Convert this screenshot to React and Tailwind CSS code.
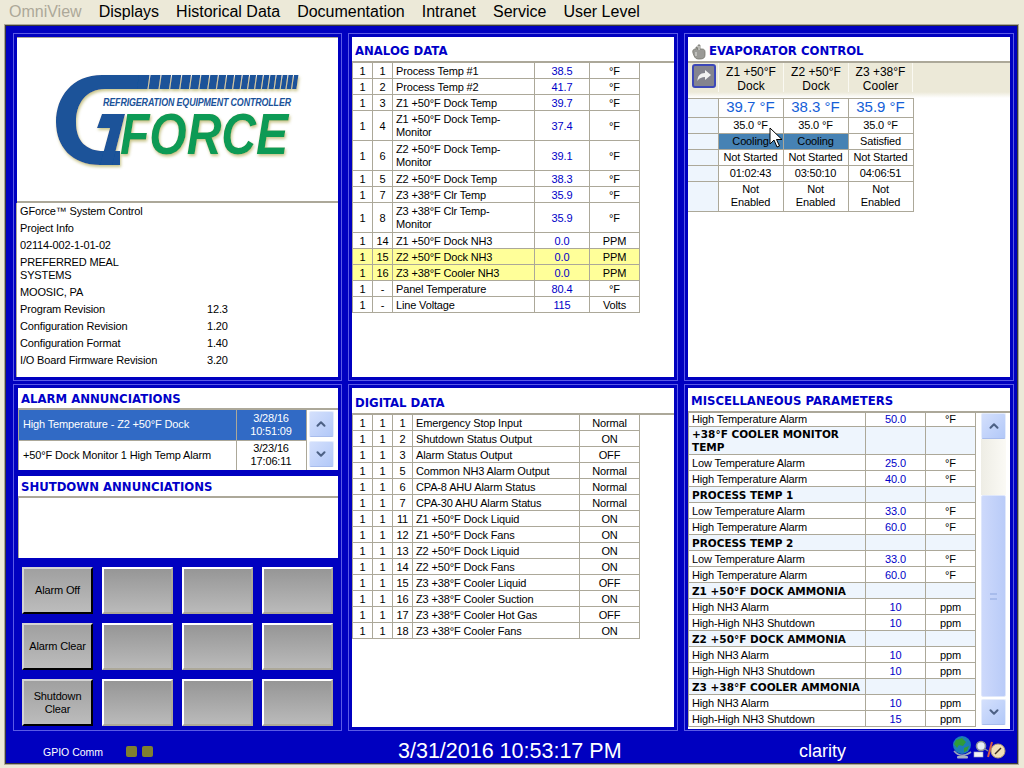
import { ChevronUp, ChevronDown } from "lucide-react";

const menu = ["Displays", "Historical Data", "Documentation", "Intranet", "Service", "User Level"];

const analog = [
  ["1", "1", "Process Temp #1", "38.5", "°F"],
  ["1", "2", "Process Temp #2", "41.7", "°F"],
  ["1", "3", "Z1 +50°F Dock Temp", "39.7", "°F"],
  ["1", "4", "Z1 +50°F Dock Temp-\nMonitor", "37.4", "°F"],
  ["1", "6", "Z2 +50°F Dock Temp-\nMonitor", "39.1", "°F"],
  ["1", "5", "Z2 +50°F Dock Temp", "38.3", "°F"],
  ["1", "7", "Z3 +38°F Clr Temp", "35.9", "°F"],
  ["1", "8", "Z3 +38°F Clr Temp-\nMonitor", "35.9", "°F"],
  ["1", "14", "Z1 +50°F Dock NH3", "0.0", "PPM"],
  ["1", "15", "Z2 +50°F Dock NH3", "0.0", "PPM", true],
  ["1", "16", "Z3 +38°F Cooler NH3", "0.0", "PPM", true],
  ["1", "-", "Panel Temperature", "80.4", "°F"],
  ["1", "-", "Line Voltage", "115", "Volts"],
];

const digital = [
  ["1", "Emergency Stop Input", "Normal"],
  ["2", "Shutdown Status Output", "ON"],
  ["3", "Alarm Status Output", "OFF"],
  ["5", "Common NH3 Alarm Output", "Normal"],
  ["6", "CPA-8 AHU Alarm Status", "Normal"],
  ["7", "CPA-30 AHU Alarm Status", "Normal"],
  ["11", "Z1 +50°F Dock Liquid", "ON"],
  ["12", "Z1 +50°F Dock Fans", "ON"],
  ["13", "Z2 +50°F Dock Liquid", "ON"],
  ["14", "Z2 +50°F Dock Fans", "ON"],
  ["15", "Z3 +38°F Cooler Liquid", "OFF"],
  ["16", "Z3 +38°F Cooler Suction", "ON"],
  ["17", "Z3 +38°F Cooler Hot Gas", "OFF"],
  ["18", "Z3 +38°F Cooler Fans", "ON"],
];

const misc = [
  ["High Temperature Alarm", "50.0", "°F"],
  ["+38°F COOLER MONITOR TEMP"],
  ["Low Temperature Alarm", "25.0", "°F"],
  ["High Temperature Alarm", "40.0", "°F"],
  ["PROCESS TEMP 1"],
  ["Low Temperature Alarm", "33.0", "°F"],
  ["High Temperature Alarm", "60.0", "°F"],
  ["PROCESS TEMP 2"],
  ["Low Temperature Alarm", "33.0", "°F"],
  ["High Temperature Alarm", "60.0", "°F"],
  ["Z1 +50°F DOCK AMMONIA"],
  ["High NH3 Alarm", "10", "ppm"],
  ["High-High NH3 Shutdown", "10", "ppm"],
  ["Z2 +50°F DOCK AMMONIA"],
  ["High NH3 Alarm", "10", "ppm"],
  ["High-High NH3 Shutdown", "10", "ppm"],
  ["Z3 +38°F COOLER AMMONIA"],
  ["High NH3 Alarm", "10", "ppm"],
  ["High-High NH3 Shutdown", "15", "ppm"],
];

const zones = [
  { name: ["Z1 +50°F", "Dock"], temp: "39.7 °F", set: "35.0 °F", state: "Cooling", time: "01:02:43" },
  { name: ["Z2 +50°F", "Dock"], temp: "38.3 °F", set: "35.0 °F", state: "Cooling", time: "03:50:10" },
  { name: ["Z3 +38°F", "Cooler"], temp: "35.9 °F", set: "35.0 °F", state: "Satisfied", time: "04:06:51" },
];

const cellBase = "border border-[#aca899] px-0 pt-0 text-center align-middle leading-[13px]";
const cell = `${cellBase} pt-px`;
const textCell = "border border-[#aca899] pb-0 pt-px px-[3px] text-left align-middle leading-[13px] whitespace-pre-line";
const sideCell = "bg-[#eef5fd] border-y border-y-[#aca899] border-r border-r-[#aca899]";

function Frame({ children, className = "" }) {
  return (
    <div className={`border border-[#5a5ae6] p-[3px] flex flex-col min-h-0 ${className}`}>
      {children}
    </div>
  );
}

function Heading({ children, className = "" }) {
  return (
    <div className={`font-['DejaVu_Sans',sans-serif] font-bold text-[11.7px] tracking-normal text-[#0000c8] flex items-center px-[3px] whitespace-nowrap ${className}`}>
      {children}
    </div>
  );
}

function ScrollBtn({ down, className = "" }) {
  const Icon = down ? ChevronDown : ChevronUp;
  return (
    <div className={`w-[25px] flex items-center justify-center rounded-[2px] bg-gradient-to-br from-[#d4e0fc] to-[#b2c8f8] border border-[#e4ecfc] border-b-[#a8bcec] ${className}`}>
      <Icon size={14} strokeWidth={3.5} className="text-[#4d6185]" />
    </div>
  );
}

function Logo() {
  const stripes = [];
  let x = 137;
  let w = 10.5;
  while (x < 296) {
    stripes.push(<polygon key={x} points={`${x + 2},74 ${x + w + 2},74 ${x + w},88 ${x},88`} fill="#1a5299" />);
    x += w + 1;
    w = Math.max(1.2, w * 0.955);
  }
  return (
    <svg width="322" height="165" viewBox="17 37 322 165" className="block">
      <defs>
        <filter id="glow" x="-5%" y="-5%" width="110%" height="115%">
          <feDropShadow dx="1" dy="2" stdDeviation="1.5" floodColor="#c8c488" />
        </filter>
      </defs>
      <g filter="url(#glow)">
        <path d="M56 121 C56 96 72 74 102 74 H140 V88 H105 C86 88 76 103 76 121 C76 140 86 150 104 150 H120 V164 H100 C72 164 56 146 56 121 Z" fill="#1a5299" />
        <polygon points="102,113 125,113 112,164 100,164 110,127 97,127" fill="#1a5299" />
        {stripes}
        <text x="120" y="153" fontFamily="'Liberation Sans', sans-serif" fontWeight="bold" fontStyle="italic" fontSize="57" fill="#0b9a55" textLength="168" lengthAdjust="spacingAndGlyphs">
          FORCE
        </text>
      </g>
      <text x="103" y="105" fontFamily="'Liberation Sans', sans-serif" fontWeight="bold" fontStyle="italic" fontSize="10.5" fill="#1a5299" textLength="188" lengthAdjust="spacingAndGlyphs">
        REFRIGERATION EQUIPMENT CONTROLLER
      </text>
    </svg>
  );
}

function InfoRow({ label, value, className = "" }) {
  return (
    <div className={`flex items-center leading-[13px] min-h-[17px] ${className}`}>
      <div className="w-[187px] shrink-0">{label}</div>
      <div>{value}</div>
    </div>
  );
}

function HandIcon() {
  return (
    <svg width="16" height="16" viewBox="0 0 16 16" className="mr-[2px] shrink-0">
      <path d="M2 9 C1 6 3 5 4 5 L5 5 L5 3 L6 3 L7 6 L7 1.5 C7 0.5 9 0.5 9 1.5 L9 5 L11 5 C13 5 14 6 14 8 L14 11 C14 14 12 15 9 15 L7 15 C4 15 3 12 2 9 Z" fill="#9a9a96" stroke="#77776f" strokeWidth="0.8" />
      <path d="M8 2 L8 6 M5 8 L5 12" stroke="#e4e4e0" strokeWidth="1" />
    </svg>
  );
}

function StatusIcon() {
  return (
    <svg width="56" height="27" viewBox="0 0 56 27" className="block">
      <circle cx="10" cy="11" r="9" fill="#1c7ab8" />
      <path d="M4 6 L10 4 L14 8 L11 12 L7 11 L5 14 L2 10 Z M12 14 L17 12 L15 17 L12 18 Z" fill="#2f9b3a" />
      <path d="M2 17 Q9 25 19 18" stroke="#9aa6b8" strokeWidth="1.6" fill="none" />
      <rect x="5" y="22" width="11" height="2.5" rx="1" fill="#a8b0c0" />
      <rect x="22" y="18" width="9" height="5" fill="#f2f2f6" stroke="#a0a8c0" strokeWidth="0.6" />
      <circle cx="29" cy="12" r="4.5" fill="#e6eef6" stroke="#8a9098" strokeWidth="1.6" />
      <path d="M33 15 L36 17" stroke="#8a9098" strokeWidth="1.4" />
      <path d="M36 23 L40 8" stroke="#d85848" strokeWidth="2" />
      <circle cx="46" cy="17" r="7" fill="#f0dfb8" stroke="#b8a070" strokeWidth="1" />
      <path d="M43 20 L49 14" stroke="#403020" strokeWidth="1.4" />
    </svg>
  );
}

function ActionButton({ label }) {
  if (!label) {
    return (
      <div className="h-[47px] border-2 border-t-white border-l-white border-r-[#aca899] border-b-[#aca899] bg-gradient-to-b from-[#969696] to-[#bababa]" />
    );
  }
  return (
    <div className="h-[47px] border-2 border-t-[#d4d4d4] border-l-[#d4d4d4] border-r-black border-b-black bg-gradient-to-b from-[#a0a0a0] to-[#bcbcbc] flex items-center justify-center text-center leading-[13px]">
      {label}
    </div>
  );
}

export default function App() {
  return (
    <div className="w-[1024px] h-[768px] overflow-hidden relative flex flex-col bg-[#ece9d8] font-['Liberation_Sans',Arial,sans-serif] text-[11px] tracking-[-0.15px] text-black">
      {/* Menu */}
      <div className="h-[25px] shrink-0 flex items-center pl-[9px] pb-[2px] gap-[17px] text-[16px] tracking-normal">
        <span className="text-[#aca899]">OmniView</span>
        {menu.map((m) => (
          <span key={m}>{m}</span>
        ))}
      </div>

      {/* Window */}
      <div className="ml-[5px] mr-[6px] h-[739px] shrink-0 border border-[#3a3a3a] outline outline-1 outline-[#aca899] bg-[#0000c0] pt-[7px] pl-[6px] flex flex-col">
        <div className="grid grid-cols-[330px_330px_330px] grid-rows-[348px_347px] gap-x-[6px] gap-y-[3px]">
          {/* Left top */}
          <Frame className="ml-px">
            <div className="bg-white flex-1 flex flex-col border-t border-t-[#aca899]">
              <div className="h-[165px] border-b-2 border-b-[#aca899] overflow-hidden">
                <Logo />
              </div>
              <div className="flex-1 pl-[3px] border-l border-l-[#aca899] -ml-px">
                <InfoRow label="GForce™ System Control" />
                <InfoRow label="Project Info" />
                <InfoRow label="02114-002-1-01-02" />
                <InfoRow label={<>PREFERRED MEAL<br />SYSTEMS</>} className="min-h-[30px]" />
                <InfoRow label="MOOSIC, PA" />
                <InfoRow label="Program Revision" value="12.3" />
                <InfoRow label="Configuration Revision" value="1.20" />
                <InfoRow label="Configuration Format" value="1.40" />
                <InfoRow label="I/O Board Firmware Revision" value="3.20" />
              </div>
            </div>
          </Frame>

          {/* Analog */}
          <Frame>
            <div className="bg-white flex-1 flex flex-col">
              <Heading className="h-[25px] pt-[4px]">ANALOG DATA</Heading>
              <div className="flex-1 border-t-2 border-t-[#aca899] bg-white -mt-px">
                <table className="table-fixed border-collapse w-[287px] -mt-px">
                  <colgroup>
                    <col className="w-[20px]" />
                    <col className="w-[20px]" />
                    <col className="w-[142px]" />
                    <col className="w-[55px]" />
                    <col className="w-[50px]" />
                  </colgroup>
                  <tbody>
                    {analog.map((r, i) => (
                      <tr key={i} className={`${r[2].endsWith("Monitor") ? "h-[30px]" : "h-[16px]"} ${r[5] ? "bg-[#ffff99]" : ""}`}>
                        <td className={cell}>{r[0]}</td>
                        <td className={cell}>{r[1]}</td>
                        <td className={textCell}>{r[2]}</td>
                        <td className={`${cell} text-[#0000c8]`}>{r[3]}</td>
                        <td className={cell}>{r[4]}</td>
                      </tr>
                    ))}
                  </tbody>
                </table>
              </div>
            </div>
          </Frame>

          {/* Evaporator */}
          <Frame>
            <div className="bg-white flex-1 flex flex-col">
              <Heading className="h-[25px] pt-[4px]">
                <HandIcon />
                EVAPORATOR CONTROL
              </Heading>
              <div className="border-t-2 border-t-[#aca899] -mt-px bg-[#ece9d8] h-[31px] flex">
                <div className="w-[30px] flex justify-center pl-[2px] pt-[1px]">
                  <div className="w-[24px] h-[24px] rounded-[3px] border-2 border-[#3c48b8] bg-[#84848e] flex items-center justify-center">
                    <svg width="16" height="14" viewBox="0 0 16 14">
                      <path d="M9 1 L15 6 L9 11 L9 8 C6 8 3 9 1.5 12 C1.5 7 4 4 9 4 Z" fill="#f2f2f2" />
                    </svg>
                  </div>
                </div>
                {zones.map((z) => (
                  <div key={z.name[0]} className="w-[65px] text-center text-[12px] tracking-normal leading-[14px] border-l border-l-[#faf9f2] last:border-r last:border-r-[#faf9f2] flex flex-col justify-center pt-[3px]">
                    <span>{z.name[0]}</span>
                    <span>{z.name[1]}</span>
                  </div>
                ))}
              </div>
              <div className="h-[6px] bg-gradient-to-b from-[#ece9d8] to-white" />
              <table className="table-fixed border-collapse w-[225px]">
                <colgroup>
                  <col className="w-[30px]" />
                  <col className="w-[65px]" />
                  <col className="w-[65px]" />
                  <col className="w-[65px]" />
                </colgroup>
                <tbody>
                  <tr className="h-[19px]">
                    <td className={sideCell} />
                    {zones.map((z) => (
                      <td key={z.temp} className={`${cellBase} pb-[2px] text-[15px] leading-[16px] tracking-normal text-[#1560d8]`}>{z.temp}</td>
                    ))}
                  </tr>
                  <tr className="h-[16px]">
                    <td className={sideCell} />
                    {zones.map((z, i) => (
                      <td key={i} className={cellBase}>{z.set}</td>
                    ))}
                  </tr>
                  <tr className="h-[16px]">
                    <td className={sideCell} />
                    {zones.map((z, i) => (
                      <td key={i} className={`${cellBase} ${z.state === "Cooling" ? "bg-[#4682b4]" : ""}`}>{z.state}</td>
                    ))}
                  </tr>
                  <tr className="h-[16px]">
                    <td className={sideCell} />
                    {zones.map((z, i) => (
                      <td key={i} className={cellBase}>Not Started</td>
                    ))}
                  </tr>
                  <tr className="h-[16px]">
                    <td className={sideCell} />
                    {zones.map((z, i) => (
                      <td key={i} className={cellBase}>{z.time}</td>
                    ))}
                  </tr>
                  <tr className="h-[30px]">
                    <td className={sideCell} />
                    {zones.map((z, i) => (
                      <td key={i} className={`${cellBase} pb-[2px]`}>Not<br />Enabled</td>
                    ))}
                  </tr>
                </tbody>
              </table>
            </div>
          </Frame>

          {/* Left bottom */}
          <Frame className="ml-px pl-[4px]">
            <div className="bg-white h-[82px] shrink-0 flex flex-col">
              <Heading className="h-[20px] pt-[3px] px-[2px] tracking-[-0.3px]">ALARM ANNUNCIATIONS</Heading>
              <div className="flex-1 border-t-2 border-t-[#aca899] border-l border-l-[#aca899] flex">
                <table className="table-fixed border-collapse w-[287px] h-[60px]">
                  <colgroup>
                    <col className="w-[217px]" />
                    <col className="w-[70px]" />
                  </colgroup>
                  <tbody>
                    <tr className="h-[30px] bg-[#316ac5] text-white">
                      <td className="border-b border-b-[#aca899] px-[4px] text-left leading-[13px]">High Temperature - Z2 +50°F Dock</td>
                      <td className="border-x border-b border-[#aca899] text-center leading-[13px]">3/28/16<br />10:51:09</td>
                    </tr>
                    <tr className="h-[30px]">
                      <td className="px-[4px] text-left leading-[13px]">+50°F Dock Monitor 1 High Temp Alarm</td>
                      <td className="border-x border-[#aca899] text-center leading-[13px]">3/23/16<br />17:06:11</td>
                    </tr>
                  </tbody>
                </table>
                <div className="flex flex-col gap-[4px] pl-[2px] pt-[1px]">
                  <ScrollBtn className="h-[26px]" />
                  <ScrollBtn down className="h-[26px]" />
                </div>
              </div>
            </div>
            <div className="bg-white h-[82px] mt-[6px] shrink-0 flex flex-col">
              <Heading className="h-[20px] pt-[3px] px-[2px] tracking-[-0.3px]">SHUTDOWN ANNUNCIATIONS</Heading>
              <div className="flex-1 border-t-2 border-t-[#aca899] border-l border-l-[#aca899]" />
            </div>
            <div className="grid grid-cols-[71px_71px_71px_71px] gap-x-[9px] gap-y-[9px] pl-[4px] pt-[9px]">
              <ActionButton label="Alarm Off" />
              <ActionButton />
              <ActionButton />
              <ActionButton />
              <ActionButton label="Alarm Clear" />
              <ActionButton />
              <ActionButton />
              <ActionButton />
              <ActionButton label={<>Shutdown<br />Clear</>} />
              <ActionButton />
              <ActionButton />
              <ActionButton />
            </div>
          </Frame>

          {/* Digital */}
          <Frame>
            <div className="bg-white flex-1 flex flex-col">
              <Heading className="h-[26px] pt-[5px]">DIGITAL DATA</Heading>
              <div className="flex-1 border-t-2 border-t-[#aca899] -mt-px">
                <table className="table-fixed border-collapse w-[287px] -mt-px">
                  <colgroup>
                    <col className="w-[20px]" />
                    <col className="w-[20px]" />
                    <col className="w-[20px]" />
                    <col className="w-[167px]" />
                    <col className="w-[60px]" />
                  </colgroup>
                  <tbody>
                    {digital.map((r) => (
                      <tr key={r[0]} className="h-[16px]">
                        <td className={cell}>1</td>
                        <td className={cell}>1</td>
                        <td className={cell}>{r[0]}</td>
                        <td className={textCell}>{r[1]}</td>
                        <td className={cell}>{r[2]}</td>
                      </tr>
                    ))}
                  </tbody>
                </table>
              </div>
            </div>
          </Frame>

          {/* Misc */}
          <Frame>
            <div className="bg-white flex-1 flex flex-col">
              <Heading className="h-[24px] pt-[4px]">MISCELLANEOUS PARAMETERS</Heading>
              <div className="flex-1 flex border-t-2 border-t-[#aca899] -mt-px overflow-hidden">
                <table className="table-fixed border-collapse w-[287px] h-fit -mt-[2px]">
                  <colgroup>
                    <col className="w-[177px]" />
                    <col className="w-[60px]" />
                    <col className="w-[50px]" />
                  </colgroup>
                  <tbody>
                    {misc.map((r, i) =>
                      r[1] ? (
                        <tr key={i} className={i === 0 ? "h-[14px]" : "h-[16px]"}>
                          <td className={textCell}>{r[0]}</td>
                          <td className={`${cell} text-[#0000c8]`}>{r[1]}</td>
                          <td className={cell}>{r[2]}</td>
                        </tr>
                      ) : (
                        <tr key={i} className={`${i === 1 ? "h-[28px]" : "h-[16px]"} bg-[#eef5fd]`}>
                          <td className={`${textCell} font-['DejaVu_Sans',sans-serif] font-bold text-[10.5px] tracking-normal ${i === 1 ? "" : "whitespace-nowrap"}`}>{r[0]}</td>
                          <td className={cell} />
                          <td className={cell} />
                        </tr>
                      )
                    )}
                  </tbody>
                </table>
                <div className="flex flex-col w-[26px] ml-[5px] h-[316px]">
                  <ScrollBtn className="h-[26px] shrink-0" />
                  <div className="h-[56px] w-[25px] shrink-0 bg-gradient-to-r from-[#eeede5] to-[#fbfaf5]" />
                  <div className="h-[202px] w-[25px] shrink-0 rounded-[2px] bg-gradient-to-r from-[#cdd9fb] to-[#b9cbf8] border border-[#dfe7fb] flex items-center justify-center">
                    <div className="w-[7px] h-[7px] border-y-2 border-y-[#a8bcec]" />
                  </div>
                  <ScrollBtn down className="h-[26px] mt-[2px] shrink-0" />
                </div>
              </div>
            </div>
          </Frame>
        </div>

        {/* Status bar */}
        <div className="flex-1 flex items-center text-white pt-[8px]">
          <div className="w-[31px] shrink-0" />
          <span className="w-[83px] shrink-0 mt-[4px] text-[10.5px] tracking-normal">GPIO Comm</span>
          <div className="w-[11px] h-[11px] rounded-[2px] bg-[#808030] shrink-0" />
          <div className="w-[11px] h-[11px] rounded-[2px] bg-[#808030] ml-[5px] shrink-0" />
          <span className="ml-[245px] w-[223px] shrink-0 text-[21.5px] tracking-normal leading-[24px] text-center whitespace-nowrap">3/31/2016 10:53:17 PM</span>
          <span className="ml-[178px] w-[46px] shrink-0 text-[18px] tracking-normal leading-[22px]">clarity</span>
          <div className="ml-[107px] -mt-[8px] shrink-0">
            <StatusIcon />
          </div>
        </div>
      </div>

      {/* Mouse pointer */}
      <svg width="14" height="22" viewBox="0 0 14 22" className="absolute left-[769px] top-[127px]">
        <path d="M1 1 L1 17 L5 13 L8 20 L10.5 19 L7.5 12.5 L13 12.5 Z" fill="#fff" stroke="#000" strokeWidth="1" />
      </svg>
    </div>
  );
}
